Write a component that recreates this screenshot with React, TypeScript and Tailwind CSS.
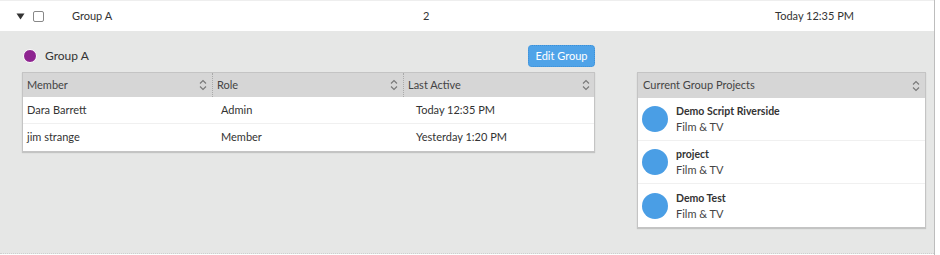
import React from "react";

const Sort = () => (
  <svg width="8" height="12" viewBox="0 0 8 12" className="shrink-0">
    <path d="M1 4.5 L4 1.5 L7 4.5" fill="none" stroke="#777" strokeWidth="1.1" />
    <path d="M1 7.5 L4 10.5 L7 7.5" fill="none" stroke="#777" strokeWidth="1.1" />
  </svg>
);

const members = [
  { name: "Dara Barrett", role: "Admin", last: "Today 12:35 PM" },
  { name: "jim strange", role: "Member", last: "Yesterday 1:20 PM" },
];

const projects = [
  { title: "Demo Script Riverside", sub: "Film & TV" },
  { title: "project", sub: "Film & TV" },
  { title: "Demo Test", sub: "Film & TV" },
];

export default function App() {
  return (
    <div
      className="w-[940px] h-[255px] bg-white flex overflow-hidden text-[11px] text-[#333]"
      style={{ fontFamily: "Lato, 'Open Sans', sans-serif" }}
    >
      <div className="w-[935px] flex flex-col border-r border-[#bdbdbd]">
        <div className="h-[31px] flex items-center border-t border-[#eee] shrink-0">
          <div className="w-[29px] flex justify-end pr-[4px]">
            <svg width="9" height="7" viewBox="0 0 9 7">
              <path d="M0.5 0.5 L8.5 0.5 L4.5 6.5 Z" fill="#333" />
            </svg>
          </div>
          <div className="w-[40px] flex items-center pl-[4px]">
            <div className="w-[11px] h-[11px] border border-[#888] rounded-[2px] bg-white" />
          </div>
          <div className="w-[351px] pl-[3px]">Group A</div>
          <div className="w-[353px] pl-[3px]">2</div>
          <div className="pl-[2px]">Today 12:35 PM</div>
        </div>
        <div className="flex-1 bg-[#e6e7e6] flex items-start pl-[22px] pt-[14px] border-b border-dotted border-[#cfcfcf]">
          <div className="w-[573px] flex flex-col">
            <div className="h-[27px] flex items-start justify-between">
              <div className="flex items-center gap-[8px] pl-[1px] mt-[2px]">
                <div className="w-[14px] h-[14px] rounded-full bg-[#8e2490] border border-white" />
                <span className="text-[12px]">Group A</span>
              </div>
              <button className="h-[22px] w-[67px] mt-[0px] rounded-[4px] bg-[#4fa3e8] text-white text-[11px] border border-dotted border-[#3c8fd6]">
                Edit Group
              </button>
            </div>
            <div className="border border-[#c4c4c4] bg-white shadow-[0_1px_1px_rgba(0,0,0,0.15)]">
              <div className="h-[24px] bg-[#d6d6d6] flex items-center text-[#444]">
                <div className="w-[190px] h-full flex items-center justify-between pl-[4px] pr-[5px] border-r border-dotted border-[#aaa]">
                  <span>Member</span>
                  <Sort />
                </div>
                <div className="w-[191px] h-full flex items-center justify-between pl-[4px] pr-[5px] border-r border-dotted border-[#aaa]">
                  <span>Role</span>
                  <Sort />
                </div>
                <div className="flex-1 h-full flex items-center justify-between pl-[4px] pr-[4px]">
                  <span>Last Active</span>
                  <Sort />
                </div>
              </div>
              {members.map((m, i) => (
                <div
                  key={m.name}
                  className={`h-[27px] flex items-center ${i === 0 ? "border-b border-[#f0f0f0]" : ""}`}
                >
                  <div className="w-[194px] pl-[4px]">{m.name}</div>
                  <div className="w-[195px] pl-[4px]">{m.role}</div>
                  <div className="flex-1 pl-[4px]">{m.last}</div>
                </div>
              ))}
            </div>
          </div>
          <div className="w-[289px] ml-[42px] mt-[27px] border border-[#c4c4c4] bg-white shadow-[0_1px_1px_rgba(0,0,0,0.15)]">
            <div className="h-[25px] bg-[#d6d6d6] flex items-center justify-between pl-[5px] pr-[5px] text-[#444]">
              <span>Current Group Projects</span>
              <Sort />
            </div>
            {projects.map((p, i) => (
              <div
                key={p.title}
                className={`h-[43px] flex items-center gap-[8px] pl-[4px] ${i < 2 ? "border-b border-[#f0f0f0]" : ""}`}
              >
                <div className="w-[26px] h-[26px] rounded-full bg-[#4a9ee5]" />
                <div className="flex flex-col leading-[15px]">
                  <span className="font-bold text-[10.5px]">{p.title}</span>
                  <span className="text-[#444]">{p.sub}</span>
                </div>
              </div>
            ))}
          </div>
        </div>
        <div className="h-[1px] shrink-0" />
      </div>
    </div>
  );
}
